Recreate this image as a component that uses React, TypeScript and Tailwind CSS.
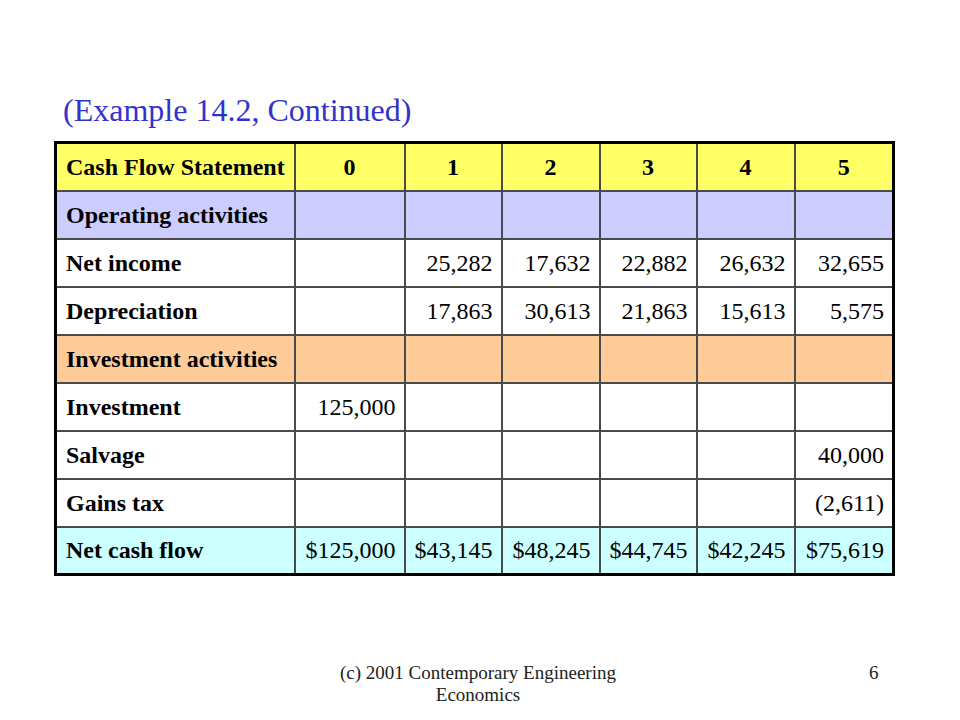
import React from "react";

type Row = {
  label: string;
  values: string[];
  bg: string;
};

const headers = ["0", "1", "2", "3", "4", "5"];

const rows: Row[] = [
  { label: "Operating activities", values: ["", "", "", "", "", ""], bg: "bg-[#ccccff]" },
  { label: "Net income", values: ["", "25,282", "17,632", "22,882", "26,632", "32,655"], bg: "bg-white" },
  { label: "Depreciation", values: ["", "17,863", "30,613", "21,863", "15,613", "5,575"], bg: "bg-white" },
  { label: "Investment activities", values: ["", "", "", "", "", ""], bg: "bg-[#ffcc99]" },
  { label: "Investment", values: ["125,000", "", "", "", "", ""], bg: "bg-white" },
  { label: "Salvage", values: ["", "", "", "", "", "40,000"], bg: "bg-white" },
  { label: "Gains tax", values: ["", "", "", "", "", "(2,611)"], bg: "bg-white" },
  {
    label: "Net cash flow",
    values: ["$125,000", "$43,145", "$48,245", "$44,745", "$42,245", "$75,619"],
    bg: "bg-[#ccffff]",
  },
];

const colWidths = ["w-[239px]", "w-[110px]", "w-[97px]", "w-[98px]", "w-[97px]", "w-[98px]", "w-[99px]"];

export default function App() {
  return (
    <div className="w-[960px] h-[720px] bg-white flex flex-col font-['Liberation_Serif','Times_New_Roman',serif] text-black">
      {/* Title */}
      <h1 className="pl-[63px] pt-[90px] text-[32px] leading-[40px] text-[#3333cc]">
        (Example 14.2, Continued)
      </h1>

      {/* Cash flow table */}
      <div className="pl-[54px] pt-[11px]">
        <table className="table-fixed border-collapse border-[3px] border-black w-[838px] text-[24px]">
          <colgroup>
            {colWidths.map((w, i) => (
              <col key={i} className={w} />
            ))}
          </colgroup>
          <thead>
            <tr className="h-[48px] bg-[#ffff66]">
              <th className="border-2 border-[#4a4a4a] pl-[9px] pr-0 text-left font-bold whitespace-nowrap">
                Cash Flow Statement
              </th>
              {headers.map((h) => (
                <th key={h} className="border-2 border-[#4a4a4a] text-center font-bold">
                  {h}
                </th>
              ))}
            </tr>
          </thead>
          <tbody>
            {rows.map((r) => (
              <tr key={r.label} className={`h-[48px] ${r.bg}`}>
                <td className="border-2 border-[#4a4a4a] pl-[9px] font-bold whitespace-nowrap">{r.label}</td>
                {r.values.map((v, i) => (
                  <td key={i} className="border-2 border-[#4a4a4a] pr-[8px] text-right whitespace-nowrap">
                    {v}
                  </td>
                ))}
              </tr>
            ))}
          </tbody>
        </table>
      </div>

      {/* Footer */}
      <div className="relative mt-auto mb-[14px] h-[44px]">
        <p className="absolute left-[326px] w-[304px] text-center text-[19px] leading-[22px] text-[#222]">
          (c) 2001 Contemporary Engineering Economics
        </p>
        <p className="absolute left-[869px] text-[19px] leading-[22px] text-[#222]">6</p>
      </div>
    </div>
  );
}
